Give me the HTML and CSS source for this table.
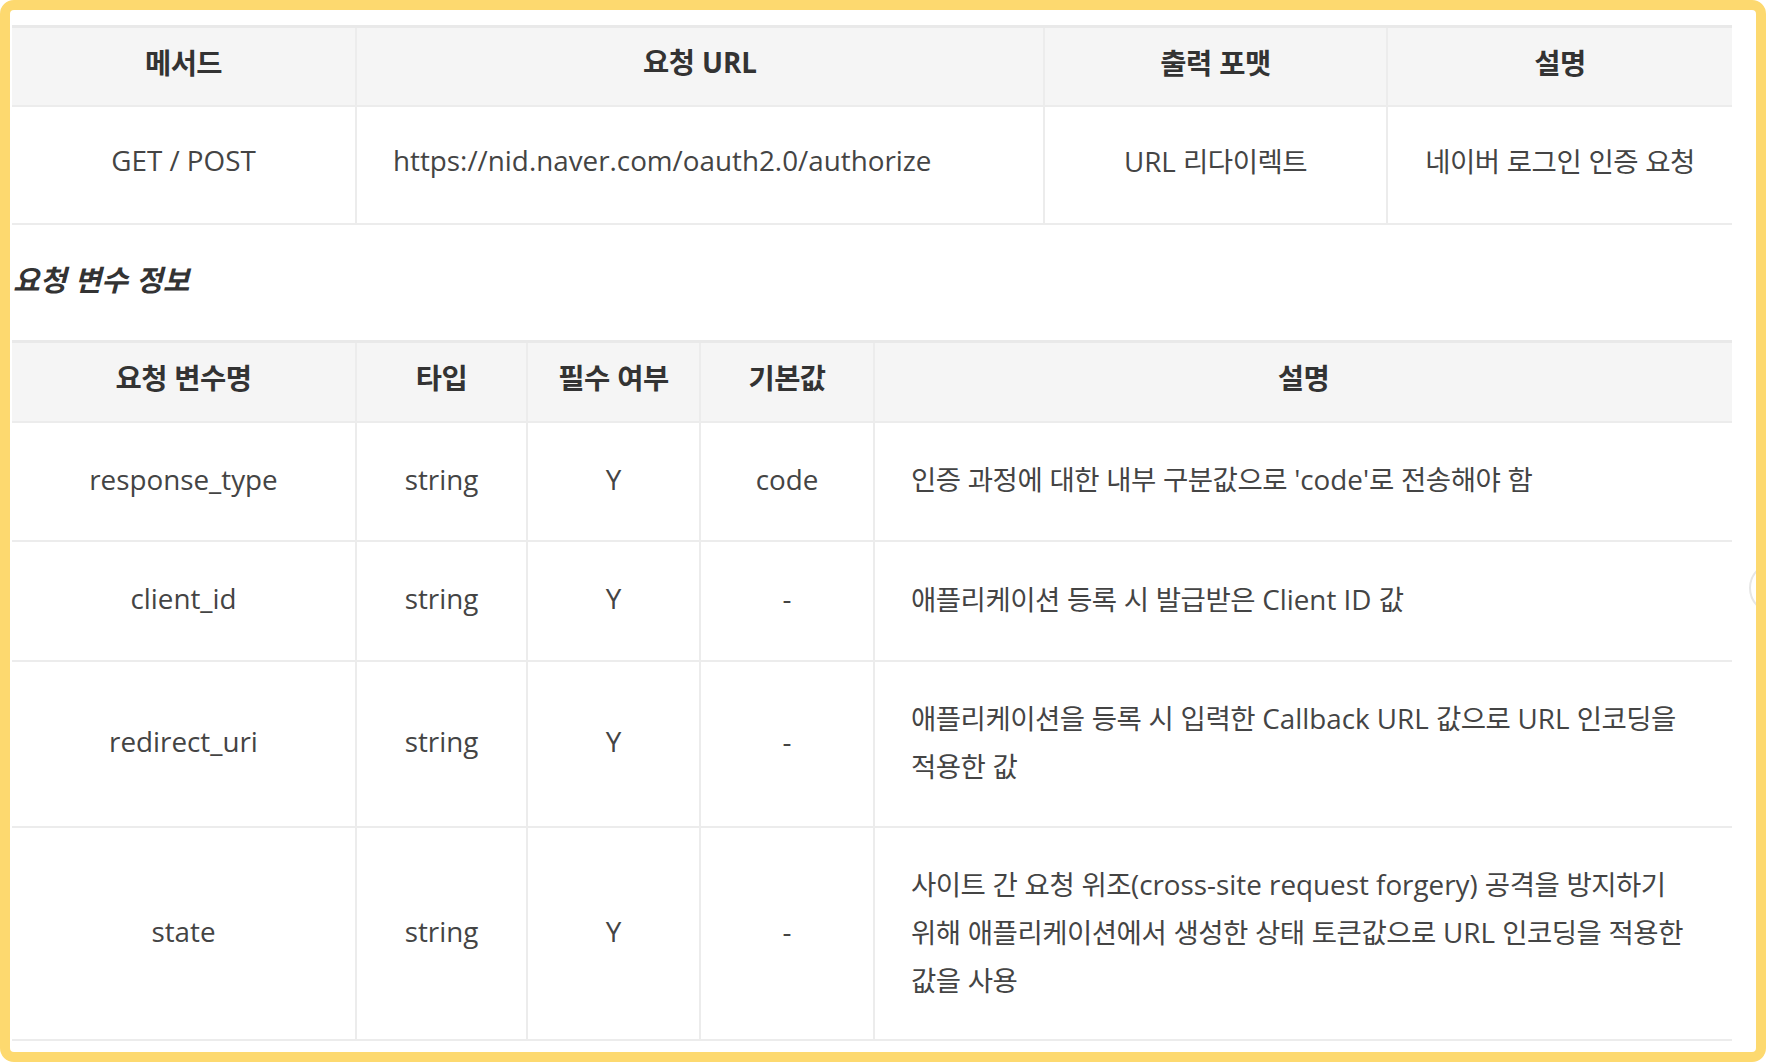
FILE: index.html
```html
<!DOCTYPE html>
<html lang="ko">
<head>
<meta charset="utf-8">
<title>네이버 로그인 API</title>
<link rel="stylesheet" href="styles.css">
</head>
<body>
<div class="frame">
  <span class="scroll-knob"></span>
  <table class="api-table url-table">
    <colgroup>
      <col class="c-method"><col class="c-url"><col class="c-format"><col class="c-desc">
    </colgroup>
    <thead>
      <tr class="head-row">
        <th>메서드</th>
        <th>요청 <span class="en">URL</span></th>
        <th>출력 포맷</th>
        <th>설명</th>
      </tr>
    </thead>
    <tbody>
      <tr class="row-url">
        <td class="en">GET / POST</td>
        <td class="left en">https://nid.naver.com/oauth2.0/authorize</td>
        <td><span class="en">URL</span> 리다이렉트</td>
        <td>네이버 로그인 인증 요청</td>
      </tr>
    </tbody>
  </table>

  <h3 class="section-title">요청 변수 정보</h3>

  <table class="api-table param-table">
    <colgroup>
      <col class="p-name"><col class="p-type"><col class="p-req"><col class="p-def"><col class="p-desc">
    </colgroup>
    <thead>
      <tr class="head-row2">
        <th>요청 변수명</th>
        <th>타입</th>
        <th>필수 여부</th>
        <th>기본값</th>
        <th>설명</th>
      </tr>
    </thead>
    <tbody>
      <tr class="r1">
        <td class="en">response_type</td>
        <td class="en">string</td>
        <td class="en">Y</td>
        <td class="en">code</td>
        <td class="left">인증 과정에 대한 내부 구분값으로 <span class="en">'code'</span>로 전송해야 함</td>
      </tr>
      <tr class="r2">
        <td class="en">client_id</td>
        <td class="en">string</td>
        <td class="en">Y</td>
        <td class="en">-</td>
        <td class="left">애플리케이션 등록 시 발급받은 <span class="en">Client ID</span> 값</td>
      </tr>
      <tr class="r3">
        <td class="en">redirect_uri</td>
        <td class="en">string</td>
        <td class="en">Y</td>
        <td class="en">-</td>
        <td class="left">애플리케이션을 등록 시 입력한 <span class="en">Callback URL</span> 값으로 <span class="en">URL</span> 인코딩을<br>적용한 값</td>
      </tr>
      <tr class="r4">
        <td class="en">state</td>
        <td class="en">string</td>
        <td class="en">Y</td>
        <td class="en">-</td>
        <td class="left">사이트 간 요청 위조<span class="en">(cross-site request forgery)</span> 공격을 방지하기<br>위해 애플리케이션에서 생성한 상태 토큰값으로 <span class="en">URL</span> 인코딩을 적용한<br>값을 사용</td>
      </tr>
    </tbody>
  </table>
</div>
</body>
</html>
```

FILE: styles.css
```css
html, body {
  margin: 0;
  padding: 0;
  background: #ffffff;
}

body {
  font-family: "Noto Sans CJK KR", "Open Sans", sans-serif;
  font-size: 27.5px;
  letter-spacing: -0.5px;
  color: #444444;
}

.frame {
  position: relative;
  box-sizing: border-box;
  width: 1766px;
  height: 1062px;
  border: 10px solid #fdd96f;
  border-radius: 14px;
  padding: 15px 23px 0 2px;
  overflow: hidden;
  background: #ffffff;
}

.scroll-knob {
  position: absolute;
  left: 1739px;
  top: 552px;
  width: 48px;
  height: 48px;
  border: 2px solid #e6e6e6;
  border-radius: 50%;
  background: #ffffff;
}

.en {
  font-family: "Open Sans", "Noto Sans CJK KR", sans-serif;
  font-size: 27.8px;
  letter-spacing: 0;
}

.api-table {
  width: 1720px;
  border-collapse: collapse;
  table-layout: fixed;
  border-top: 3px solid #e9e9e9;
}

.api-table th,
.api-table td {
  border: 2px solid #ececec;
  text-align: center;
  vertical-align: middle;
  padding: 0 4px 10px;
  line-height: 47px;
  white-space: nowrap;
}

.param-table tbody td {
  padding-bottom: 5px;
}

.url-table tbody td {
  padding-bottom: 8px;
}

.api-table th:first-child,
.api-table td:first-child {
  border-left: none;
}

.api-table th:last-child,
.api-table td:last-child {
  border-right: none;
}

.api-table th {
  background: #f5f5f5;
  font-weight: 700;
  font-size: 28.5px;
  color: #333333;
}

.api-table td.left {
  text-align: left;
  padding-left: 36px;
  padding-right: 20px;
}

.c-method { width: 344px; }
.c-url { width: 688px; }
.c-format { width: 343px; }
.c-desc { width: 345px; }

.p-name { width: 344px; }
.p-type { width: 171px; }
.p-req { width: 173px; }
.p-def { width: 174px; }
.p-desc { width: 858px; }

.head-row { height: 79px; }
.row-url { height: 118px; }

.head-row2 { height: 81px; }
.r1 { height: 119px; }
.r2 { height: 120px; }
.r3 { height: 166px; }
.r4 { height: 213px; }

.section-title {
  margin: 0;
  padding: 35px 0 44px 1px;
  line-height: 36px;
  font-size: 29px;
  letter-spacing: 0;
  font-weight: 700;
  font-style: italic;
  color: #333333;
}
```
